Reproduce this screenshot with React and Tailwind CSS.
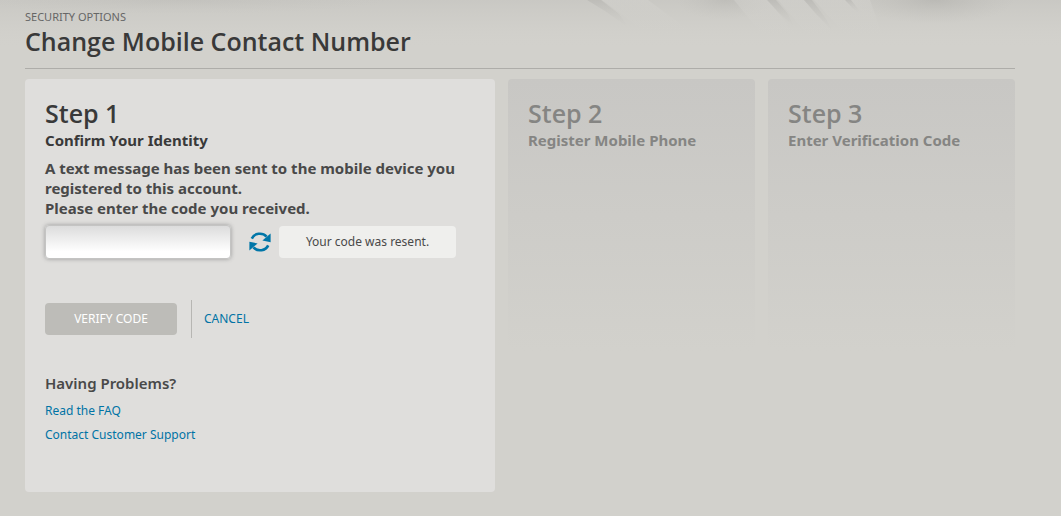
/**
 * "Change Mobile Contact Number" flow: the current step is the light panel,
 * the upcoming steps are dimmed until they are reached.
 */
const UPCOMING = [
  { title: "Step 2", subtitle: "Register Mobile Phone" },
  { title: "Step 3", subtitle: "Enter Verification Code" },
];

function StoneTexture() {
  return (
    <svg
      aria-hidden="true"
      className="absolute inset-x-0 top-0 h-12 w-full"
      viewBox="0 0 1061 48"
      preserveAspectRatio="none"
    >
      <defs>
        <linearGradient id="shade" x1="0" y1="0" x2="0" y2="1">
          <stop offset="0" stopColor="#b4b3af" stopOpacity="0.3" />
          <stop offset="0.4" stopColor="#bfbeba" stopOpacity="0.2" />
          <stop offset="1" stopColor="#d2d1cc" stopOpacity="0" />
        </linearGradient>
        <radialGradient id="dark">
          <stop offset="0" stopColor="#a09f9b" stopOpacity="0.5" />
          <stop offset="1" stopColor="#b5b4b0" stopOpacity="0" />
        </radialGradient>
        <linearGradient id="streak" x1="0" y1="0" x2="0" y2="1">
          <stop offset="0" stopColor="#d3d2ce" stopOpacity="0.5" />
          <stop offset="1" stopColor="#d2d1cc" stopOpacity="0" />
        </linearGradient>
        <linearGradient id="crack" x1="0" y1="0" x2="0" y2="1">
          <stop offset="0" stopColor="#b6b5b1" stopOpacity="0.6" />
          <stop offset="1" stopColor="#c8c7c3" stopOpacity="0" />
        </linearGradient>
      </defs>
      <rect width="1061" height="48" fill="url(#shade)" />
      <ellipse cx="180" cy="0" rx="210" ry="14" fill="url(#dark)" opacity="0.3" />
      <ellipse cx="725" cy="0" rx="48" ry="20" fill="url(#dark)" opacity="0.5" />
      <ellipse cx="935" cy="0" rx="80" ry="24" fill="url(#dark)" opacity="0.7" />
      <g fill="url(#streak)">
        <path d="M602 0h46l46 34h-46z" />
        <path d="M734 0h34l34 42h-34z" />
        <path d="M778 0h26l38 42h-28z" />
        <path d="M814 0h56l14 40h-34z" />
      </g>
      <g fill="url(#crack)">
        <path d="M587 0h14l18 14 10 14-24-17z" />
        <path d="M767 0h9l12 14 6 13-16-15z" />
        <path d="M804 0h8l12 16 10 16-18-18z" />
        <path d="M845 0h6l8 10-2 3z" />
      </g>
    </svg>
  );
}

function ResendIcon() {
  return (
    <svg viewBox="0 0 22 20" className="h-5 w-[22px]" aria-hidden="true">
      <g fill="none" stroke="#0076a8" strokeWidth="2.6">
        <path d="M2.8 6.6C5.2 1.2 13.2-.1 17.6 4.6" />
        <path d="M19.2 13.4C16.8 18.8 8.8 20.1 4.4 15.4" />
      </g>
      <path d="M21.6 1.4v8.8l-8.2-1.6z" fill="#0076a8" />
      <path d="M.4 18.6V9.8l8.2 1.6z" fill="#0076a8" />
    </svg>
  );
}

function StepHeading({ title, subtitle }) {
  return (
    <>
      <h2 className="font-['Open_Sans',sans-serif] text-[25px] leading-[33px] font-semibold">
        {title}
      </h2>
      <h3 className="text-[15px] leading-5 font-bold">{subtitle}</h3>
    </>
  );
}

export default function App() {
  return (
    <div className="relative min-h-screen bg-[#d2d1cc] pt-[9px] pr-[46px] pb-6 pl-[25px] font-['Noto_Sans','Open_Sans',sans-serif] text-[#494949]">
      <StoneTexture />
      <div className="relative">
        <header className="border-b border-[#aeada9] pb-[10px]">
          <p className="text-[11px] leading-4 text-[#666]">SECURITY OPTIONS</p>
          <h1 className="font-['Open_Sans',sans-serif] text-[25px] leading-[33px] font-semibold text-[#393939]">
            Change Mobile Contact Number
          </h1>
        </header>

        <main className="mt-[10px] grid grid-cols-[470fr_247fr_247fr] items-start gap-[13px]">
          <section className="rounded bg-[#dfdedc] px-5 pt-[18px] pb-[45px]">
            <div className="text-[#393939]">
              <StepHeading title="Step 1" subtitle="Confirm Your Identity" />
            </div>
            <form onSubmit={(e) => e.preventDefault()}>
              <label htmlFor="code" className="mt-2 block text-[15px] leading-5 font-bold">
                A text message has been sent to the mobile device you registered to this account.
                <br />
                Please enter the code you received.
              </label>
              <div className="mt-[7px] flex items-center">
                <input
                  id="code"
                  type="text"
                  autoComplete="one-time-code"
                  className="h-[34px] w-[186px] rounded border border-[#c4c4c3] bg-linear-to-b from-[#dcdcdc] to-white to-80% px-3 text-sm shadow-[0_0_4px_#999] outline-none"
                />
                <button type="button" aria-label="Resend code" className="ml-[18px]">
                  <ResendIcon />
                </button>
                <p
                  role="status"
                  className="ml-2 min-w-[177px] rounded-sm bg-[#efefed] px-6 py-2 text-center text-[12px] leading-4"
                >
                  Your code was resent.
                </p>
              </div>
              <div className="mt-[41px] flex items-center">
                <button
                  type="submit"
                  className="h-8 w-[132px] rounded-sm bg-[#bdbcb8] text-[12px] text-white"
                >
                  VERIFY CODE
                </button>
                <a
                  href="#cancel"
                  className="ml-[14px] border-l border-[#b7b6b3] pl-3 text-[12px] leading-[38px] text-[#0073a5]"
                >
                  CANCEL
                </a>
              </div>
            </form>
            <h4 className="mt-[35px] text-[15px] leading-5 font-semibold">Having Problems?</h4>
            <ul className="mt-[6px] text-[12px] leading-6 text-[#0073a5]">
              <li>
                <a href="#faq">Read the FAQ</a>
              </li>
              <li>
                <a href="#support">Contact Customer Support</a>
              </li>
            </ul>
          </section>

          {UPCOMING.map((step) => (
            <section
              key={step.title}
              className="min-h-[272px] rounded bg-linear-to-b from-[#c8c7c4] to-[#d2d1cc] px-5 pt-[18px] text-[#858583]"
            >
              <StepHeading title={step.title} subtitle={step.subtitle} />
            </section>
          ))}
        </main>
      </div>
    </div>
  );
}
